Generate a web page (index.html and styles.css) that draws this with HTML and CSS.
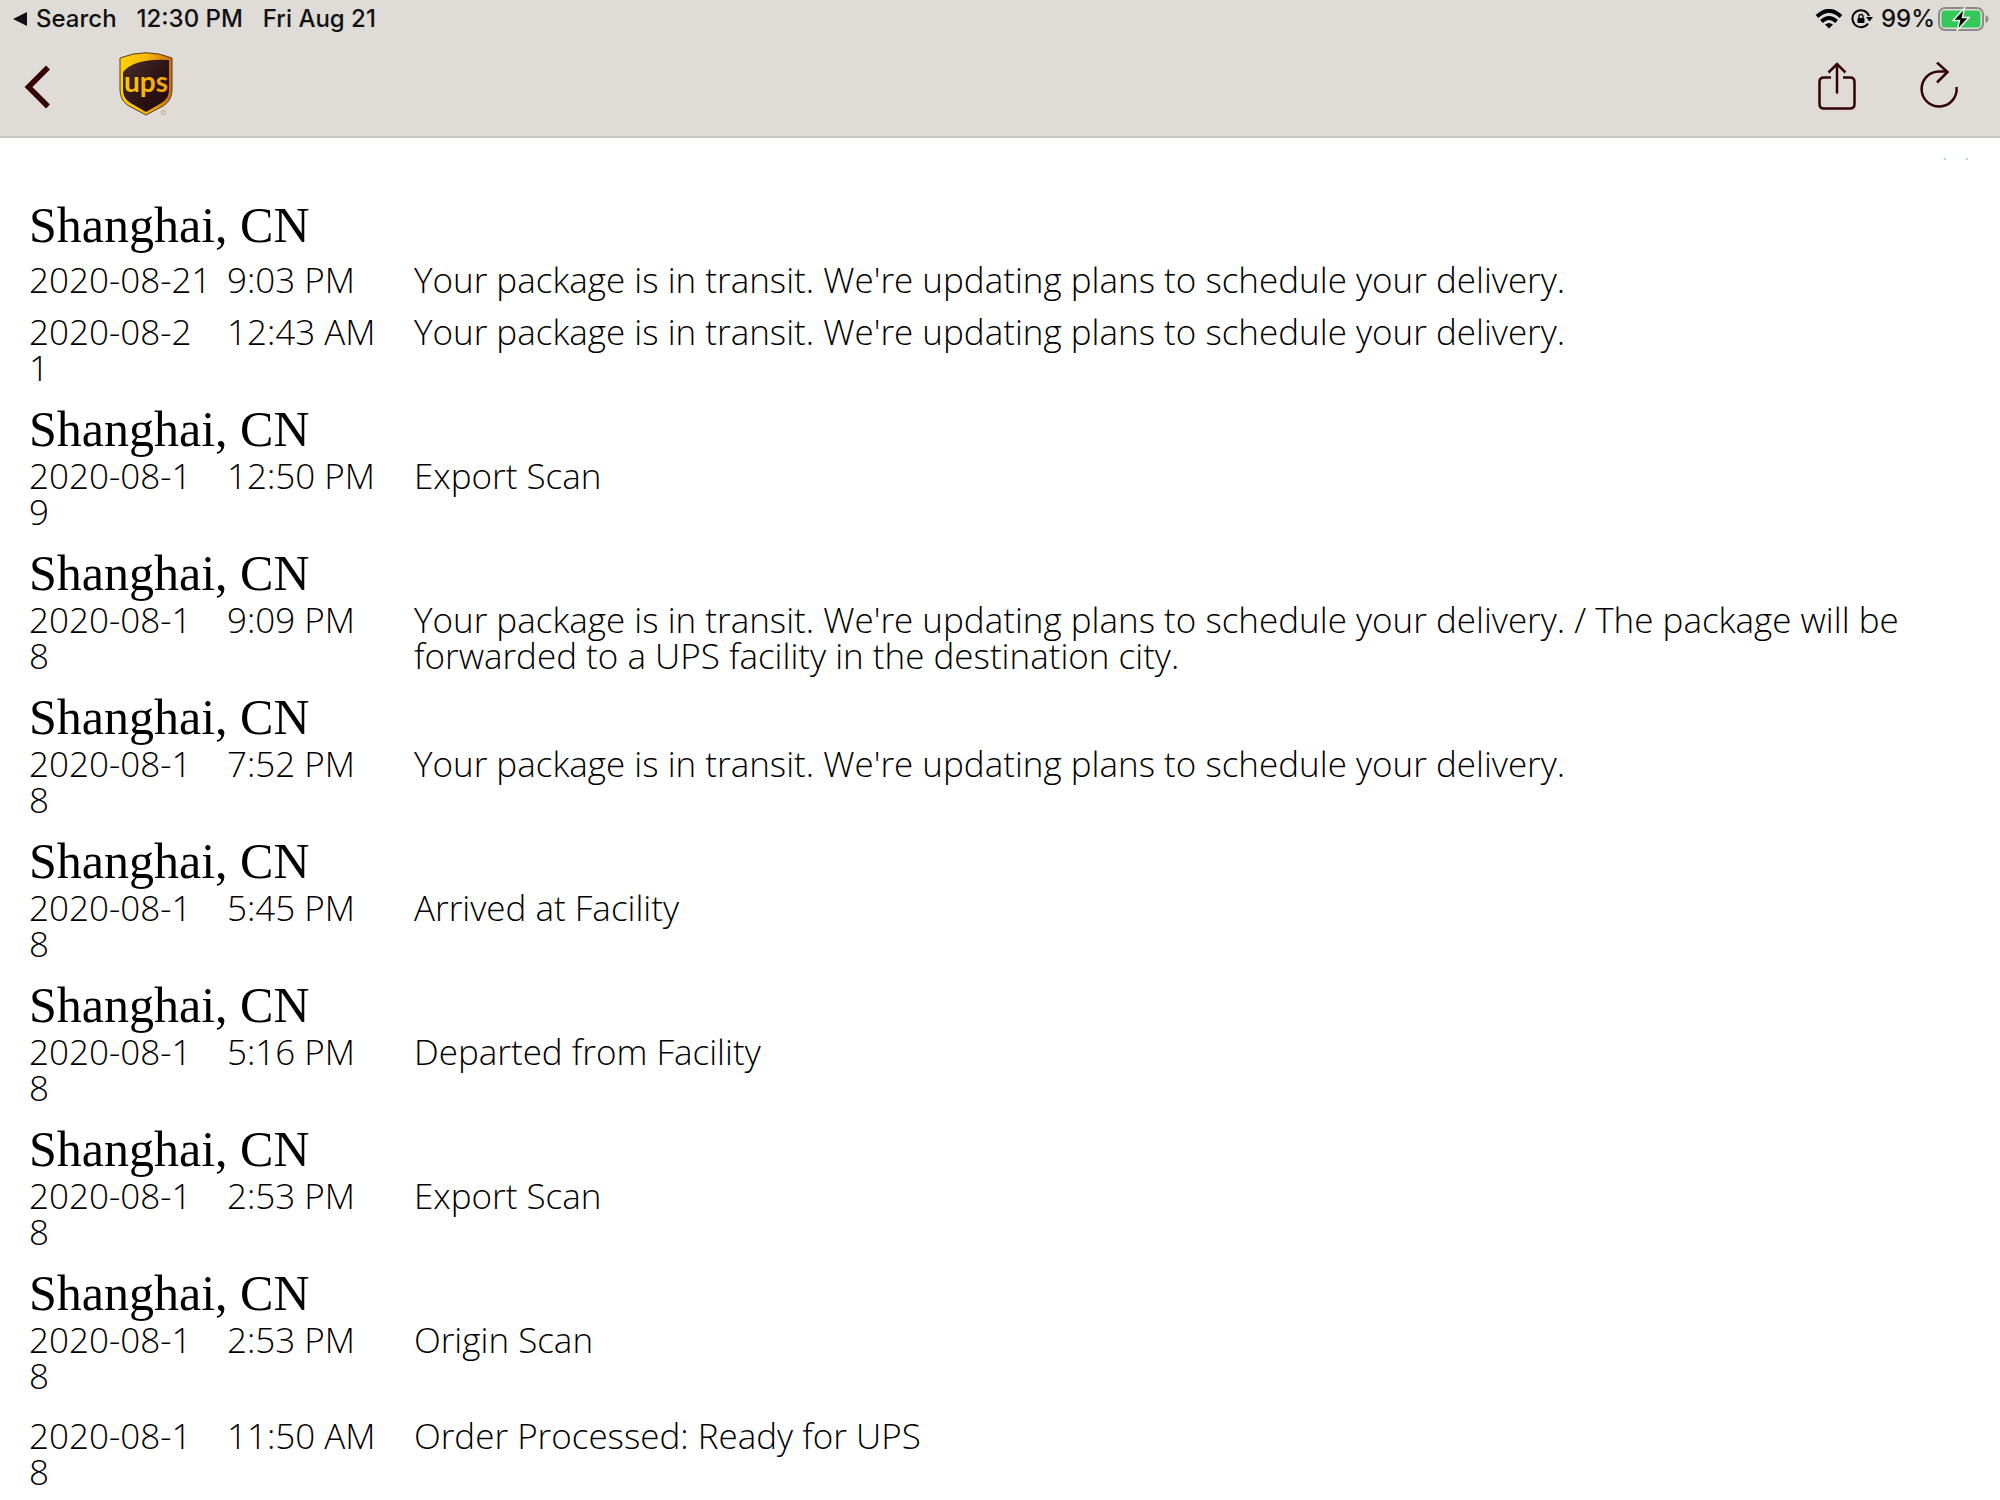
FILE: index.html
```html
<!DOCTYPE html>
<html lang="en">
<head>
    <meta charset="UTF-8">
    <title>UPS Tracking</title>
    <meta name="viewport" content="width=device-width, initial-scale=1.0">
    <link rel="stylesheet" href="styles.css">
</head>
<body>
    <header class="header">
        <div class="status-bar">
            <div class="status-left">
                <a class="back-app" href="#">
                    <svg width="16" height="16" viewBox="0 0 16 16"><path d="M1 8L15 1v14z" fill="#111"/></svg>
                    Search
                </a>
                <span>12:30 PM</span>
                <span>Fri Aug 21</span>
            </div>
            <div class="status-right">
                <svg class="wifi" width="28" height="20" viewBox="0 0 28 20" fill="none" stroke="#000" stroke-width="4">
                    <path d="M2 7.500Q14-3.500 26 7.500"/>
                    <path d="M6.500 12.500Q14 5.500 21.500 12.500"/>
                    <path d="M14 19.500L10 15.500Q14 12.500 18 15.500z" fill="#000" stroke="none"/>
                </svg>
                <svg class="lock" width="22" height="20" viewBox="0 0 22 20">
                    <path d="M17 14.500A8.500 8.500 0 1 1 18 7" fill="none" stroke="#000" stroke-width="2"/>
                    <path d="M15 8h7l-3.500 4.500z"/>
                    <rect x="6.500" y="9" width="7" height="5" rx="1"/>
                    <path d="M8 9.500V7.500a2 2 0 0 1 4 0v2" fill="none" stroke="#000" stroke-width="1.300"/>
                </svg>
                <span>99%</span>
                <svg class="battery" width="52" height="24" viewBox="0 0 52 24">
                    <rect x="1" y="1" width="44" height="22" rx="6" fill="none" stroke="#8d8b88" stroke-width="2"/>
                    <rect x="3.500" y="3.500" width="39" height="17" rx="3.500" fill="#34c759"/>
                    <path d="M47.500 8q3 1 3 4t-3 4z" fill="#8d8b88"/>
                    <path d="M26.500 1L15 13.500h6.500L19 23.500 31 10.500h-6.500z" fill="#000" stroke="#e8f5e6" stroke-width="1.500"/>
                </svg>
            </div>
        </div>
        <nav class="nav-bar">
            <button class="icon-btn back-btn" aria-label="Back">
                <svg width="28" height="46" viewBox="0 0 28 46"><path d="M24 3.500L4.500 23 24 42.500" fill="none" stroke="#350003" stroke-width="5.500"/></svg>
            </button>
            <a class="logo" href="#" aria-label="UPS">
                <svg width="56" height="66" viewBox="0 0 56 66">
                    <defs>
                        <linearGradient id="gold" x1="0" y1="0" x2="1" y2="0">
                            <stop offset="0" stop-color="#ffd200"/>
                            <stop offset="0.500" stop-color="#fab80a"/>
                            <stop offset="1" stop-color="#c9700f"/>
                        </linearGradient>
                        <linearGradient id="letters" x1="0" y1="0" x2="1" y2="0">
                            <stop offset="0" stop-color="#ffc800"/>
                            <stop offset="1" stop-color="#f0a010"/>
                        </linearGradient>
                        <linearGradient id="brown" x1="0" y1="0" x2="1" y2="1">
                            <stop offset="0" stop-color="#4b2d2c"/>
                            <stop offset="0.600" stop-color="#2a1212"/>
                            <stop offset="1" stop-color="#210c0a"/>
                        </linearGradient>
                    </defs>
                    <path d="M1 6Q27-4.500 53 6v31c0 8-3 13-9 17L27 63 10 54C4 50 1 45 1 37z" fill="url(#gold)" stroke="#5b3a24" stroke-width="1"/>
                    <path d="M4 20Q16 6 50 8v29c0 7-2.500 11-7.500 14L27 60 11.500 51C6.500 48 4 44 4 37z" fill="url(#brown)"/>
                    <text class="logo-text" x="27" y="40" text-anchor="middle" fill="url(#letters)">ups</text>
                    <circle cx="44.500" cy="60.500" r="2" fill="none" stroke="#d29b6c" stroke-width="1"/>
                </svg>
            </a>
            <div class="nav-actions">
                <button class="icon-btn" aria-label="Share">
                    <svg width="40" height="50" viewBox="0 0 40 50" fill="none" stroke="#350003" stroke-width="2.500">
                        <path d="M14 15.500H7q-4.500 0-4.500 4.500v22q0 4.500 4.500 4.500h26q4.500 0 4.500-4.500V20q0-4.500-4.500-4.500h-7"/>
                        <path d="M20 31.500V2M11.500 10.500L20 2l8.500 8.500"/>
                    </svg>
                </button>
                <button class="icon-btn" aria-label="Refresh">
                    <svg width="40" height="50" viewBox="0 0 40 50" fill="none" stroke="#350003" stroke-width="2.500">
                        <path d="M37.500 25A17.500 17.500 0 1 1 20 9.500h8"/>
                        <path d="M18 0.500l10.500 9.500L18 20.500"/>
                    </svg>
                </button>
            </div>
        </nav>
    </header>

    <main class="tracking">
        <div class="marks">
            <svg width="26" height="2" viewBox="0 0 26 2"><path d="M0 1h2M22 1h2" stroke="#4fb8b8" stroke-width="1"/></svg>
        </div>
        <table class="history">
            <colgroup>
                <col class="col-date">
                <col class="col-time">
                <col>
            </colgroup>
            <tbody>
                <tr><th colspan="3">Shanghai, CN</th></tr>
                <tr class="latest">
                    <td>2020-08-21</td>
                    <td>9:03 PM</td>
                    <td>Your package is in transit. We're updating plans to schedule your delivery.</td>
                </tr>
                <tr>
                    <td>2020-08-21</td>
                    <td>12:43 AM</td>
                    <td>Your package is in transit. We're updating plans to schedule your delivery.</td>
                </tr>
            </tbody>
            <tbody>
                <tr><th colspan="3">Shanghai, CN</th></tr>
                <tr>
                    <td>2020-08-19</td>
                    <td>12:50 PM</td>
                    <td>Export Scan</td>
                </tr>
            </tbody>
            <tbody>
                <tr><th colspan="3">Shanghai, CN</th></tr>
                <tr>
                    <td>2020-08-18</td>
                    <td>9:09 PM</td>
                    <td>Your package is in transit. We're updating plans to schedule your delivery. / The package will be forwarded to a UPS facility in the destination city.</td>
                </tr>
            </tbody>
            <tbody>
                <tr><th colspan="3">Shanghai, CN</th></tr>
                <tr>
                    <td>2020-08-18</td>
                    <td>7:52 PM</td>
                    <td>Your package is in transit. We're updating plans to schedule your delivery.</td>
                </tr>
            </tbody>
            <tbody>
                <tr><th colspan="3">Shanghai, CN</th></tr>
                <tr>
                    <td>2020-08-18</td>
                    <td>5:45 PM</td>
                    <td>Arrived at Facility</td>
                </tr>
            </tbody>
            <tbody>
                <tr><th colspan="3">Shanghai, CN</th></tr>
                <tr>
                    <td>2020-08-18</td>
                    <td>5:16 PM</td>
                    <td>Departed from Facility</td>
                </tr>
            </tbody>
            <tbody>
                <tr><th colspan="3">Shanghai, CN</th></tr>
                <tr>
                    <td>2020-08-18</td>
                    <td>2:53 PM</td>
                    <td>Export Scan</td>
                </tr>
            </tbody>
            <tbody>
                <tr><th colspan="3">Shanghai, CN</th></tr>
                <tr>
                    <td>2020-08-18</td>
                    <td>2:53 PM</td>
                    <td>Origin Scan</td>
                </tr>
            </tbody>
            <tbody>
                <tr class="no-location">
                    <td>2020-08-18</td>
                    <td>11:50 AM</td>
                    <td>Order Processed: Ready for UPS</td>
                </tr>
            </tbody>
        </table>
    </main>
</body>
</html>
```
FILE: styles.css
```css
* {
    box-sizing: border-box;
}
body {
    margin: 0;
    background: #fff;
    color: #000;
    font-family: "Open Sans", sans-serif;
}
.header {
    background: #dfdcd8;
    border-bottom: 2px solid #c8c6c3;
}
.status-bar {
    display: flex;
    justify-content: space-between;
    height: 38px;
    padding: 0 10px 0 12px;
    font-family: Inter, sans-serif;
    font-size: 24px;
    font-weight: 500;
    line-height: 38px;
    color: #111;
}
.status-left, .status-right, .back-app {
    display: flex;
    align-items: center;
}
.status-left {
    gap: 20px;
}
.back-app {
    gap: 8px;
    color: #111;
    text-decoration: none;
}
.wifi {
    margin-right: 8px;
}
.lock {
    margin-right: 8px;
}
.battery {
    margin-left: 3px;
}
.nav-bar {
    display: flex;
    align-items: center;
    height: 98px;
    padding: 0 41px 0 24px;
}
.icon-btn {
    padding: 0;
    border: none;
    background: none;
    cursor: pointer;
}
.icon-btn svg, .logo svg {
    display: block;
}
.logo {
    margin: 0 0 4px 67px;
}
.logo-text {
    font-family: Lato, sans-serif;
    font-size: 28px;
    font-weight: 700;
}
.nav-actions {
    display: flex;
    gap: 62px;
    margin-left: auto;
}
.marks {
    display: flex;
    justify-content: flex-end;
    height: 44px;
    padding: 20px 30px 0 0;
}
.history {
    width: 100%;
    table-layout: fixed;
    border-collapse: collapse;
    font-size: 35px;
    font-weight: 350;
    line-height: 36px;
}
.col-date {
    width: 227px;
}
.col-time {
    width: 187px;
}
.history th {
    padding: 14px 29px 0;
    font-family: "Liberation Serif", serif;
    font-size: 50px;
    font-weight: normal;
    line-height: 58px;
    text-align: left;
}
.history td {
    padding: 0;
    vertical-align: top;
}
.history td:first-child {
    padding: 0 24px 0 29px;
    word-break: break-all;
}
.history td:last-child {
    padding-right: 60px;
}
.history .latest td {
    padding-top: 8px;
    padding-bottom: 16px;
}
.history .latest td:first-child {
    white-space: nowrap;
}
.history .no-location td {
    padding-top: 24px;
}
```
